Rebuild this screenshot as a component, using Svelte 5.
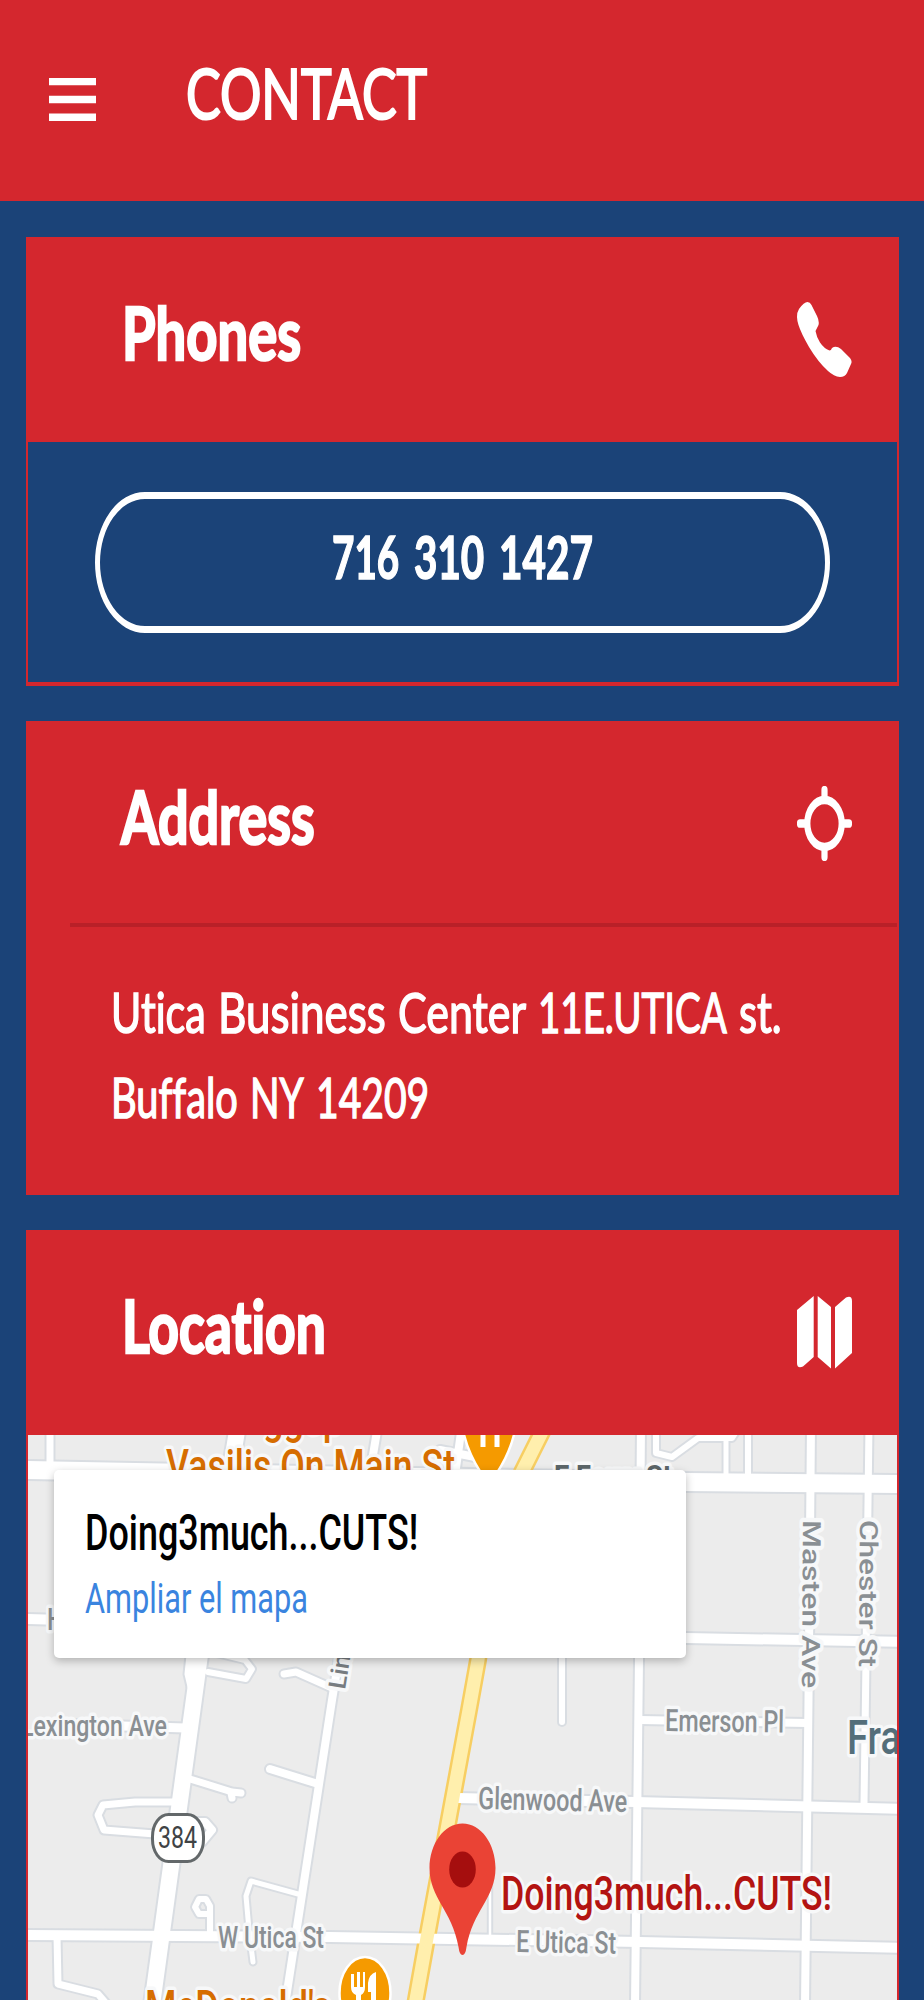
<script lang="ts">
    const shopName = "Doing3much...CUTS!";

    const phone = [
        { text: "716", width: 67 },
        { text: "310", width: 70 },
        { text: "1427", width: 94 },
    ];

    const addressLines = [
        [
            { text: "Utica", width: 95 },
            { text: "Business", width: 168 },
            { text: "Center", width: 128 },
            { text: "11E.UTICA", width: 189 },
            { text: "st.", width: 43 },
        ],
        [
            { text: "Buffalo", width: 127 },
            { text: "NY", width: 54 },
            { text: "14209", width: 113 },
        ],
    ];

    const roads = [
        { d: "M28 1470 L686 1482 L910 1484", w: 18 },
        { d: "M50 1430 V1465", w: 7 },
        { d: "M28 1619 L686 1638 L910 1642", w: 10 },
        { d: "M238 1425 L200 1655 L152 2005", w: 16 },
        { d: "M378 1425 L332 1700 L285 2005", w: 8 },
        { d: "M20 1935 L330 1937 L640 1942 L910 1948", w: 10 },
        { d: "M458 1798 L635 1802 L910 1809", w: 10 },
        { d: "M640 1720 L807 1723", w: 8 },
        { d: "M641 1425 L639 1660 L635 2005", w: 8 },
        { d: "M811 1425 L808.5 1700 L805 2005", w: 8 },
        { d: "M869 1425 L866 1660 L864 1804", w: 7 },
        { d: "M748 1425 V1474", w: 6 },
        { d: "M726 1438 V1474", w: 5 },
        { d: "M656 1425 V1453 L672 1457 L698 1438 H732 L740 1425", w: 6 },
        { d: "M562 1640 V1722", w: 6 },
        { d: "M193 1695 L188 1674 L190 1655", w: 7 },
        { d: "M208 1672 L246 1679 L252 1669 L245 1660 L212 1652", w: 6 },
        { d: "M332 1688 L296 1672 L284 1674", w: 7 },
        { d: "M190 1779 L232 1792 L241 1793 M231 1793 L232 1798", w: 7 },
        { d: "M270 1769 L315 1783", w: 8 },
        { d: "M178 1802 H135 L103 1805 L98 1815 L104 1830 L155 1834", w: 7 },
        { d: "M180 1822 H205 L212 1830 L202 1842", w: 8 },
        { d: "M298 1894 L251 1881 L246 1896 L249 1930 L253 1962", w: 5 },
        { d: "M210 1935 L210 1906 L206 1899 H199 L195 1907 L199 1914 H208", w: 6 },
        { d: "M57 1936 L58 1984 L98 1994 L110 2008", w: 7 },
        { d: "M490 1880 V1942", w: 2.5 },
        { d: "M462 1425 L456 1468 M440 1450 L480 1458", w: 8 },
        { d: "M60 1724 L185 1728", w: 9 },
    ];

    const mainStreet =
        "M543 1430 L522 1472 Q490 1560 478 1660 L469 1710 L427 1938 L415 2005";

    const labels = [
        { text: "ggsp", x: 263, y: 1434, w: 80, size: 47, fill: "#d66d00" },
        { text: "Vasilis On Main St", x: 166, y: 1482, w: 289, size: 47, fill: "#d66d00" },
        { text: "McDonald's", x: 145, y: 2023, w: 186, size: 47, fill: "#d66d00" },
        { text: "E Ferry St", x: 554, y: 1487, w: 118, size: 31, fill: "#5c6669", weight: 700 },
        { text: "H", x: 47, y: 1630, w: 17, size: 31 },
        { text: "Lexington Ave", x: 21, y: 1736, w: 146, size: 30 },
        { text: "W Utica St", x: 218, y: 1948, w: 106, size: 31 },
        { text: "E Utica St", x: 516, y: 1952, w: 100, size: 31, angle: 1 },
        { text: "Glenwood Ave", x: 478, y: 1809, w: 149, size: 31, angle: 1.2 },
        { text: "Emerson Pl", x: 665, y: 1731, w: 119, size: 31, angle: 0.8 },
        { text: "Masten Ave", x: 803, y: 1520, w: 168, size: 25, angle: 90.4 },
        { text: "Chester St", x: 860, y: 1520, w: 147, size: 25, angle: 90.4 },
        { text: "Lin", x: 345, y: 1690, w: 35, size: 24, angle: -81, fill: "#777c80" },
        { text: "Fra", x: 847, y: 1754, w: 54, size: 48, fill: "#546e7a" },
        { text: shopName, x: 501, y: 1910, w: 331, size: 49, fill: "#b31412" },
    ];

    // squeeze a piece of text to the given width
    function fit(node: HTMLElement, width: number) {
        const scale = width / node.offsetWidth;
        node.style.width = `${width}px`;
        node.style.transform = `scaleX(${scale})`;
    }
</script>

<div class="page">
    <header>
        <svg class="menu" viewBox="0 0 47 43">
            <path d="M0 0H47V7.2H0ZM0 17.8H47V25.2H0ZM0 35.4H47V43H0Z" />
        </svg>
        <h1><span use:fit={241}>CONTACT</span></h1>
    </header>

    <main>
        <section class="card phones">
            <div class="card-head">
                <h2><span use:fit={179}>Phones</span></h2>
                <svg class="icon" viewBox="0 0 55 75">
                    <path
                        d="M10.5 0Q13 0 14.5 3L20 14Q22.5 19 21.5 23L18.5 29Q19.5 35 23 40.5Q27 46.5 32.5 48.5Q34 48.5 35 46Q39 43 44 47L53 56Q55.5 59 54 62L50 71Q48 75 43 75Q37 74.5 31 69Q21 60 12 45Q4 31 1.5 23Q0 18 0 15Q0 10 2 7Q7 0 10.5 0Z"
                    />
                </svg>
            </div>
            <div class="phone-body">
                <button>
                    {#each phone as part}
                        <span use:fit={part.width}>{part.text}</span>
                    {/each}
                </button>
            </div>
        </section>

        <section class="card address">
            <div class="card-head">
                <h2><span use:fit={194}>Address</span></h2>
                <svg class="icon" viewBox="0 0 55 55" preserveAspectRatio="none">
                    <g fill="none" stroke="#fff" stroke-width="6.2" stroke-linecap="round">
                        <circle cx="27.5" cy="27.5" r="17.2" />
                        <path d="M27.5 3V9M27.5 46V52M3 27.5H9M46 27.5H52" />
                    </g>
                </svg>
            </div>
            <div class="address-body">
                {#each addressLines as words}
                    <p>
                        {#each words as word}
                            <span use:fit={word.width}>{word.text}</span>
                        {/each}
                    </p>
                {/each}
            </div>
        </section>

        <section class="card location">
            <div class="card-head">
                <h2><span use:fit={204}>Location</span></h2>
                <svg class="icon" viewBox="0 0 55 75">
                    <path
                        d="M0 15 16.7 1V62L6 71.5Q0 74 0 68ZM20.7 1 34 12V73.5L20.7 62ZM38 12 49 2.5Q55 0 55 6V58L38 73.5Z"
                    />
                </svg>
            </div>
            <div class="map">
                <svg class="map-canvas" viewBox="28 1435 869 565">
                    <g class="road casing">
                        {#each roads as road}
                            <path d={road.d} stroke-width={road.w + 4} />
                        {/each}
                    </g>
                    <path class="road main-casing" d={mainStreet} />
                    <g class="road">
                        {#each roads as road}
                            <path d={road.d} stroke-width={road.w} />
                        {/each}
                    </g>
                    <path class="road main-fill" d={mainStreet} />

                    <g class="badge">
                        <rect x="152.5" y="1814.5" width="51" height="47" rx="16" ry="22" />
                        <text x="158" y="1848" font-size="32" textLength="39" lengthAdjust="spacingAndGlyphs">384</text>
                    </g>

                    <g class="food">
                        <path d="M462 1425Q466 1450 481 1473H497Q512 1450 516 1425Z" />
                        <path class="cutlery" d="M483 1430V1447M497 1430V1447" />
                        <ellipse cx="365" cy="1993" rx="25.5" ry="36" />
                        <path class="tool" d="M351 1974H354V1987H357V1972H360V1987H363V1972H365V1974V1987Q365 1993 361 1995V2005H356V1995Q351 1993 351 1987ZM376 1972V2005H371V1992H368V1983Q369 1974 376 1972Z" />
                    </g>

                    <path
                        class="pin"
                        d="M462.500 1823.500C481 1823.500 495.500 1844 495.500 1868C495.500 1898 473 1910 466.500 1947Q465.500 1955 462.500 1955Q459.500 1955 458.500 1947C452 1910 429.500 1898 429.500 1868C429.500 1844 444 1823.500 462.500 1823.500Z"
                    />
                    <ellipse cx="462.500" cy="1869.500" rx="13.300" ry="18" fill="#a50e0e" />

                    {#each labels as l}
                        <text
                            class="label"
                            font-size={l.size}
                            font-weight={l.weight ?? 500}
                            fill={l.fill ?? "#8a8f93"}
                            textLength={l.w}
                            lengthAdjust="spacingAndGlyphs"
                            transform={`translate(${l.x} ${l.y}) rotate(${l.angle ?? 0})`}
                        >{l.text}</text>
                    {/each}
                </svg>

                <div class="place">
                    <strong><span use:fit={333}>{shopName}</span></strong>
                    <a href="#map"><span use:fit={223}>Ampliar el mapa</span></a>
                </div>
            </div>
        </section>
    </main>
</div>

<style>
    :global(body) {
        background: #1b4378;
        overflow: hidden;
    }

    .page {
        display: flex;
        flex-direction: column;
        height: 2000px;
        overflow: hidden;
        background: #1b4378;
        color: #fff;
        font-family: Lato, "Liberation Sans", sans-serif;
        font-variant-ligatures: none;
    }

    span {
        display: inline-block;
        white-space: nowrap;
        text-align: left;
        transform-origin: left center;
    }

    h1,
    h2,
    p {
        margin: 0;
    }

    header {
        box-sizing: border-box;
        display: flex;
        flex: none;
        align-items: flex-start;
        height: 201px;
        padding: 58px 49px 0;
        background: #d4272e;
    }

    .menu {
        width: 47px;
        height: 43px;
        margin-top: 20px;
        fill: #fff;
    }

    h1 {
        margin-left: 90px;
        font-size: 69px;
        font-weight: 400;
        line-height: 70px;
        -webkit-text-stroke: 2.2px #fff;
    }

    main {
        display: flex;
        flex-direction: column;
        gap: 35px;
        padding: 36px 25px 0 26px;
    }

    .card {
        box-sizing: border-box;
        flex: none;
        border: solid #d4272e;
        border-width: 0 2px 4px 2px;
    }

    .card-head {
        box-sizing: border-box;
        display: flex;
        align-items: center;
        justify-content: space-between;
        height: 205px;
        padding: 0 45px 0 94px;
        background: #d4272e;
    }

    h2 {
        width: 300px;
        padding-bottom: 15px;
        font-size: 72px;
        font-weight: 700;
        line-height: 80px;
        -webkit-text-stroke: 2.5px #fff;
    }

    .icon {
        width: 55px;
        height: 75px;
        fill: #fff;
    }

    .phones {
        height: 449px;
    }

    .phone-body {
        padding: 50px 67px 0;
    }

    button {
        display: flex;
        align-items: center;
        justify-content: center;
        gap: 15px;
        box-sizing: border-box;
        width: 100%;
        height: 141px;
        padding: 0 0 14px;
        border: solid #fff;
        border-width: 7px 5px;
        border-radius: 50px / 70.5px;
        background: none;
        color: #fff;
        font: 700 60px/70px Lato, sans-serif;
        -webkit-text-stroke: 1.5px #fff;
    }

    .address {
        height: 474px;
        background: #d4272e;
    }

    .address .card-head {
        height: 202px;
        padding-top: 3px;
        padding-left: 93px;
    }

    .address-body {
        box-sizing: border-box;
        height: 265px;
        margin-left: 42px;
        padding: 42px 0 0 41px;
        border-top: 4px solid #b92028;
    }

    .address-body p {
        display: flex;
        gap: 12px;
        font-size: 56px;
        line-height: 85px;
        -webkit-text-stroke: 1.5px #fff;
    }

    .location {
        height: 775px;
    }

    .map {
        position: relative;
        height: 565px;
        overflow: hidden;
        background: #ececec;
        font-family: Roboto, sans-serif;
    }

    .map-canvas {
        display: block;
        width: 869px;
        height: 565px;
    }

    .road {
        fill: none;
        stroke: #fff;
        stroke-linecap: round;
        stroke-linejoin: round;
    }

    .casing {
        stroke: #d9dde2;
    }

    .main-casing {
        stroke: #f7ce62;
        stroke-width: 18;
    }

    .main-fill {
        stroke: #ffefad;
        stroke-width: 13;
    }

    .badge rect {
        fill: #fff;
        stroke: #63686a;
        stroke-width: 3;
    }

    .badge text {
        fill: #3f4345;
    }

    .food {
        fill: #f59a00;
        stroke: #fff;
        stroke-width: 2.5;
    }

    .food .cutlery {
        stroke-width: 5;
    }

    .food .tool {
        fill: #fff;
        stroke: none;
    }

    .pin {
        fill: #ea4335;
    }

    .label {
        paint-order: stroke;
        stroke: #f7f8f9;
        stroke-width: 7px;
        stroke-linejoin: round;
    }

    .place {
        position: absolute;
        top: 35px;
        left: 26px;
        box-sizing: border-box;
        width: 632px;
        height: 188px;
        padding: 32px 0 0 31px;
        border-radius: 5px;
        background: #fff;
        box-shadow: 0 3px 9px rgba(0, 0, 0, 0.25);
    }

    .place strong,
    .place a {
        display: block;
        color: #000;
        font-size: 50px;
        font-weight: 500;
        line-height: 62px;
        text-decoration: none;
    }

    .place a {
        color: #3a84df;
        font-size: 43px;
        font-weight: 400;
        line-height: 68px;
    }
</style>
